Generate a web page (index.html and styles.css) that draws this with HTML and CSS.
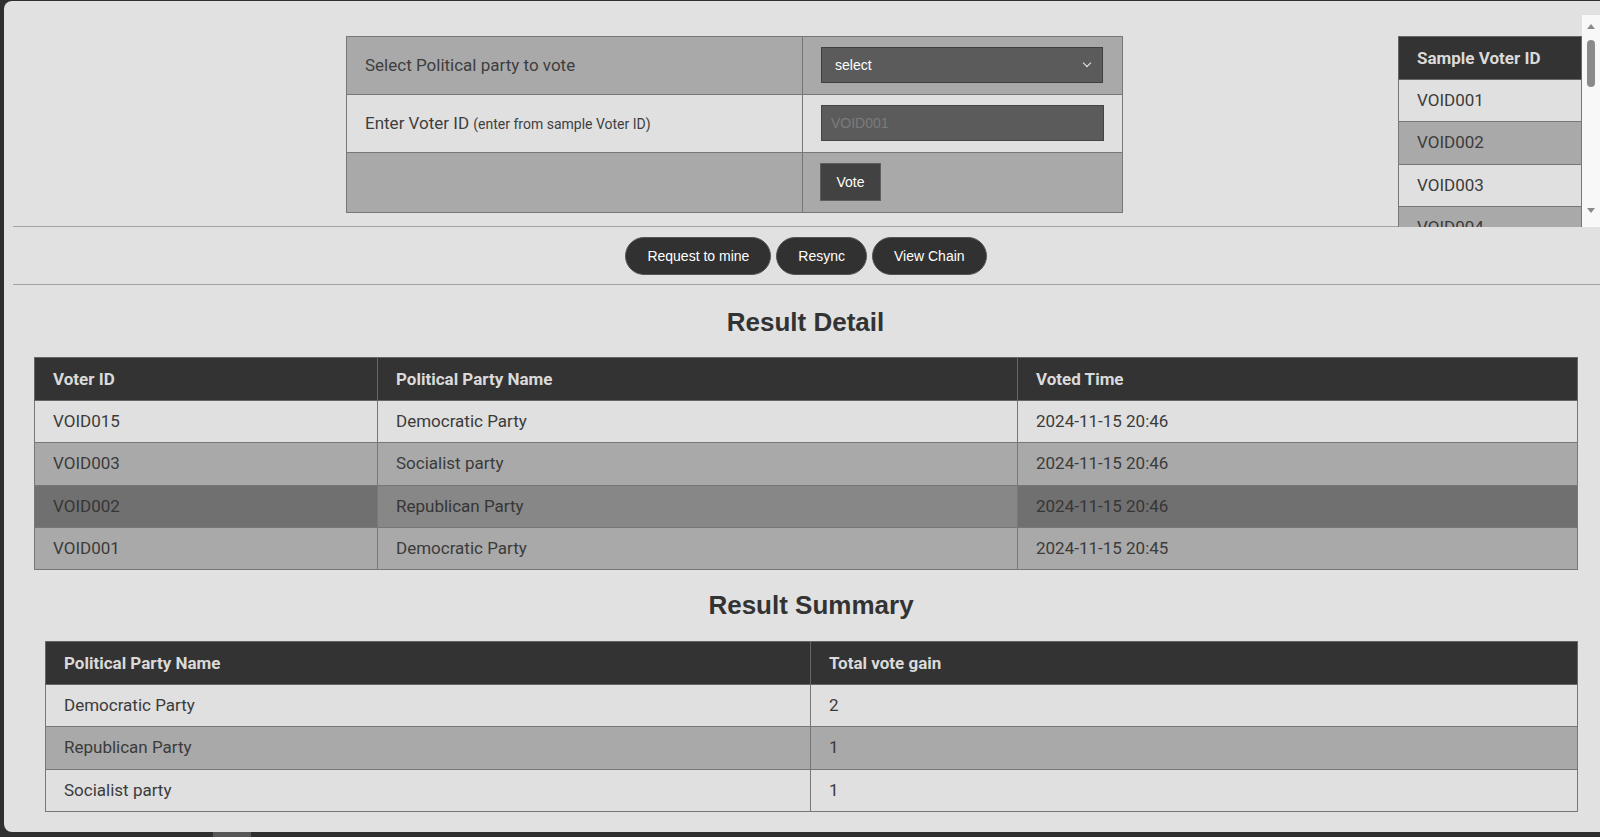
FILE: index.html
```html
<!DOCTYPE html>
<html lang="en">
<head>
<meta charset="utf-8">
<title>Voting</title>
<link rel="stylesheet" href="styles.css">
</head>
<body>
<div class="window">
  <div class="top">
    <table class="form">
      <colgroup><col class="fc1"><col class="fc2"></colgroup>
      <tr class="r-mid">
        <td class="label">Select Political party to vote</td>
        <td class="ctrl"><div class="select-wrap"><select class="sel"><option>select</option></select></div></td>
      </tr>
      <tr class="r-light">
        <td class="label">Enter Voter ID <span class="hint">(enter from sample Voter ID)</span></td>
        <td class="ctrl"><input class="inp" type="text" placeholder="VOID001"></td>
      </tr>
      <tr class="r-mid">
        <td class="label"></td>
        <td class="ctrl"><button class="vote">Vote</button></td>
      </tr>
    </table>
    <div class="sample">
      <div class="sample-view">
        <table class="data sample-table">
          <tr><th>Sample Voter ID</th></tr>
          <tr class="r-light"><td>VOID001</td></tr>
          <tr class="r-mid"><td>VOID002</td></tr>
          <tr class="r-light"><td>VOID003</td></tr>
          <tr class="r-mid"><td>VOID004</td></tr>
          <tr class="r-light"><td>VOID005</td></tr>
        </table>
      </div>
      <div class="scrollbar">
        <div class="sb-btn"><span class="tri-up"></span></div>
        <div class="sb-thumb"></div>
        <div class="sb-space"></div>
        <div class="sb-btn sb-down"><span class="tri-down"></span></div>
      </div>
    </div>
  </div>
  <hr class="rule">
  <div class="actions">
    <button class="pill">Request to mine</button>
    <button class="pill">Resync</button>
    <button class="pill">View Chain</button>
  </div>
  <hr class="rule">
  <section class="block block-detail">
    <h2 class="title">Result Detail</h2>
    <table class="data">
      <colgroup><col class="d1"><col class="d2"><col class="d3"></colgroup>
      <tr><th>Voter ID</th><th>Political Party Name</th><th>Voted Time</th></tr>
      <tr class="r-light"><td>VOID015</td><td>Democratic Party</td><td>2024-11-15 20:46</td></tr>
      <tr class="r-mid"><td>VOID003</td><td>Socialist party</td><td>2024-11-15 20:46</td></tr>
      <tr class="r-dark"><td>VOID002</td><td class="hover">Republican Party</td><td>2024-11-15 20:46</td></tr>
      <tr class="r-mid"><td>VOID001</td><td>Democratic Party</td><td>2024-11-15 20:45</td></tr>
    </table>
  </section>
  <section class="block block-summary">
    <h2 class="title">Result Summary</h2>
    <table class="data">
      <colgroup><col class="s1"><col class="s2"></colgroup>
      <tr><th>Political Party Name</th><th>Total vote gain</th></tr>
      <tr class="r-light"><td>Democratic Party</td><td>2</td></tr>
      <tr class="r-mid"><td>Republican Party</td><td>1</td></tr>
      <tr class="r-light"><td>Socialist party</td><td>1</td></tr>
    </table>
  </section>
</div>
<div class="hbar"><div class="hthumb"></div></div>
</body>
</html>
```

FILE: styles.css
```css
html, body {
  margin: 0;
  padding: 0;
  height: 837px;
  overflow: hidden;
  background: #2f2f2f;
  font-family: Roboto, "Liberation Sans", Arial, sans-serif;
}

.window {
  margin: 1px 0 0 4px;
  width: 1588px;
  height: 831px;
  padding-left: 8px;
  background: #e1e1e1;
  border-radius: 8px 0 0 8px;
  overflow: hidden;
}

.top {
  display: flex;
  align-items: flex-start;
  height: 225px;
}

/* form table */
.form {
  margin: 35px 0 0 334px;
  border-collapse: collapse;
  table-layout: fixed;
  width: 776px;
  border: 1px solid #777;
}
.fc1 { width: 456px; }
.fc2 { width: 320px; }
.form td {
  border: 1px solid #777;
  padding: 10px 18px 11px;
  vertical-align: middle;
}
.form .label {
  font-size: 17px;
  color: #3e3e3e;
}
.form .hint {
  font-size: 14px;
}
.select-wrap {
  position: relative;
  width: 282px;
  height: 36px;
}
.select-wrap::after {
  content: "";
  position: absolute;
  right: 13px;
  top: 13px;
  width: 5px;
  height: 5px;
  border-right: 1.8px solid #eee;
  border-bottom: 1.8px solid #eee;
  transform: rotate(45deg);
  pointer-events: none;
}
.sel {
  appearance: none;
  -webkit-appearance: none;
  display: block;
  width: 282px;
  height: 36px;
  margin: 0;
  padding: 0 13px;
  background: #5b5b5b;
  border: 1px solid #3f3f3f;
  border-radius: 0;
  color: #fff;
  font: 14px "Liberation Sans", Arial, sans-serif;
}
.inp {
  display: block;
  box-sizing: border-box;
  width: 283px;
  height: 36px;
  margin: 0;
  padding: 0 9px;
  background: #5b5b5b;
  border: 1px solid #454545;
  border-radius: 0;
  color: #fff;
  font: 14px "Liberation Sans", Arial, sans-serif;
}
.inp::placeholder { color: #7b7b7b; }
.vote {
  display: block;
  width: 61px;
  height: 38px;
  margin: 0 0 0 -1px;
  padding: 0;
  background: #424242;
  border: 1px solid #5e5e5e;
  border-radius: 0;
  color: #fff;
  font: 14px "Liberation Sans", Arial, sans-serif;
}

/* sample panel */
.sample {
  display: flex;
  width: 220px;
  height: 212px;
  margin: 14px 0 0 auto;
}
.sample-view {
  flex: 1;
  overflow: hidden;
  padding: 21px 0 0 18px;
}
.sample-table {
  width: 186px;
}
.scrollbar {
  width: 18px;
  flex: none;
  background: #f8f8f8;
  display: flex;
  flex-direction: column;
  align-items: center;
}
.sb-btn {
  height: 22px;
  width: 18px;
  display: flex;
  align-items: center;
  justify-content: center;
}
.sb-down { margin-bottom: 6px; }
.tri-up {
  width: 0; height: 0;
  border-left: 4px solid transparent;
  border-right: 4px solid transparent;
  border-bottom: 5px solid #8a8a8a;
}
.tri-down {
  width: 0; height: 0;
  border-left: 4px solid transparent;
  border-right: 4px solid transparent;
  border-top: 5px solid #8a8a8a;
}
.sb-thumb {
  width: 8px;
  height: 47px;
  margin-top: 3px;
  border-radius: 4px;
  background: #8a8a8a;
}
.sb-space { flex: 1; }

/* rules + actions */
.rule {
  height: 0;
  margin: 0 0 0 1px;
  border: 0;
  border-top: 1px solid #a3a3a3;
}
.actions {
  display: flex;
  justify-content: center;
  gap: 5px;
  margin: 10px 0 9px;
}
.pill {
  height: 38px;
  margin: 0;
  padding: 0 21px;
  background: #313131;
  border: 1px solid #555;
  border-radius: 20px;
  color: #fff;
  font: 14px "Liberation Sans", Arial, sans-serif;
}

/* result blocks */
.block-detail {
  margin-left: 22px;
  width: 1543px;
}
.block-summary {
  margin-left: 33px;
  width: 1532px;
}
.title {
  margin: 22px 0 20px;
  text-align: center;
  font: bold 26px/30px "Liberation Sans", Arial, sans-serif;
  color: #333;
}
.block-summary .title { margin: 20px 0 21px; }

.data {
  width: 100%;
  border-collapse: collapse;
  table-layout: fixed;
  border: 1px solid #777;
}
.d1 { width: 343px; }
.d2 { width: 640px; }
.d3 { width: 560px; }
.s1 { width: 765px; }
.s2 { width: 767px; }
.data th {
  background: #333;
  color: #dadada;
  font-weight: 700;
  font-size: 17px;
  line-height: 21px;
  text-align: left;
  padding: 11px 18px 10px;
  border: 1px solid #666;
}
.data td {
  font-size: 17px;
  line-height: 21.3px;
  color: #3b3b3b;
  padding: 10px 18px;
  border: 1px solid #777;
  white-space: nowrap;
}
.r-light { background: #e0e0e0; }
.r-mid { background: #a9a9a9; }
.r-dark { background: #707070; }
.r-dark td { color: #363636; }
.data td.hover { background: #878787; }

.hbar {
  height: 5px;
  background: #2f2f2f;
}
.hthumb {
  width: 38px;
  height: 5px;
  margin-left: 213px;
  background: #575757;
}
```
